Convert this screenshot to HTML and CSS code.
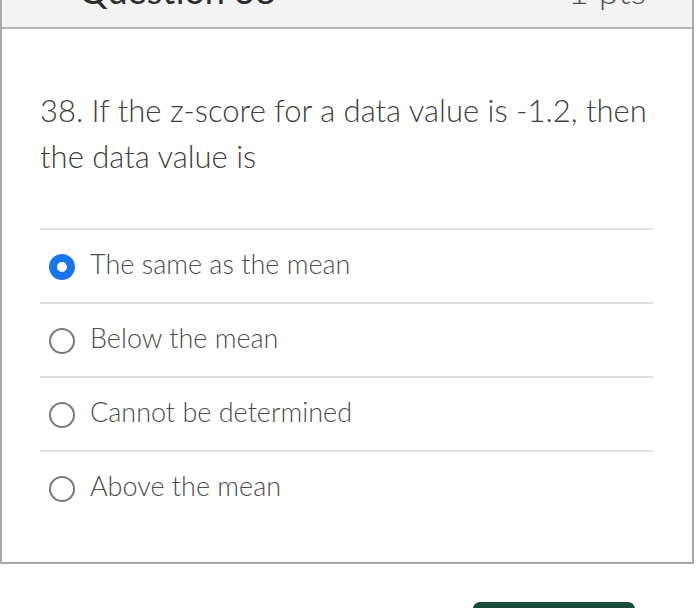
FILE: index.html
```html
<!DOCTYPE html>
<html lang="en">
<head>
<meta charset="utf-8">
<title>Question 38</title>
<link rel="stylesheet" href="styles.css">
</head>
<body>
<div class="card">
  <div class="card-header">
    <span class="q-title">Question 38</span>
    <span class="q-points">1 pts</span>
  </div>
  <div class="card-body">
    <p class="question">38. If the z-score for a data value is -1.2, then the data value is</p>
    <ul class="answers">
      <li class="answer">
        <span class="radio radio-checked"></span>
        <span class="answer-text">The same as the mean</span>
      </li>
      <li class="answer">
        <span class="radio"></span>
        <span class="answer-text">Below the mean</span>
      </li>
      <li class="answer">
        <span class="radio"></span>
        <span class="answer-text">Cannot be determined</span>
      </li>
      <li class="answer">
        <span class="radio"></span>
        <span class="answer-text">Above the mean</span>
      </li>
    </ul>
  </div>
</div>
<div class="actions">
  <button class="next-btn">Next</button>
</div>
</body>
</html>
```

FILE: styles.css
```css
html, body {
  margin: 0;
  padding: 0;
  background: #ffffff;
}

body {
  width: 700px;
  height: 608px;
  overflow: hidden;
  font-family: Lato, "Open Sans", sans-serif;
  font-weight: 300;
}

.card {
  width: 694px;
  box-sizing: border-box;
  margin-top: -31px;
  border: 2px solid #a9a9a9;
  border-top: none;
  background: #ffffff;
}

.card-header {
  height: 60px;
  box-sizing: border-box;
  background: #f2f2f2;
  border-bottom: 2px solid #b3b3b3;
  display: flex;
  justify-content: space-between;
  align-items: flex-start;
  padding: 0 46px 0 77px;
  font-size: 36px;
  line-height: 1.2;
  color: #2d2d2d;
}

.q-title {
  font-weight: 400;
}

.q-points {
  color: #555555;
}

.card-body {
  padding: 58px 39px 38px 38px;
}

.question {
  margin: 0 0 49px 0;
  font-size: 31px;
  line-height: 46px;
  color: #404040;
}

.answers {
  list-style: none;
  margin: 0;
  padding: 0;
}

.answer {
  height: 74px;
  box-sizing: border-box;
  border-top: 2px solid #e1e1e1;
  display: flex;
  align-items: center;
  gap: 15px;
  padding-left: 9px;
  padding-bottom: 4px;
}

.radio {
  flex: none;
  width: 26px;
  height: 26px;
  box-sizing: border-box;
  border-radius: 50%;
  border: 2px solid #7a7a7a;
  background: #ffffff;
  margin-top: 6px;
}

.radio-checked {
  border: 8px solid #1c75e6;
}

.answer-text {
  font-size: 27px;
  line-height: 32px;
  color: #4d4d4d;
}

.actions {
  display: flex;
  justify-content: flex-end;
  padding-right: 65px;
  margin-top: 38px;
}

.next-btn {
  width: 162px;
  height: 42px;
  border: none;
  border-radius: 7px;
  background: #1e4c3c;
  color: #ffffff;
  font-family: Lato, sans-serif;
  font-size: 22px;
}
```
